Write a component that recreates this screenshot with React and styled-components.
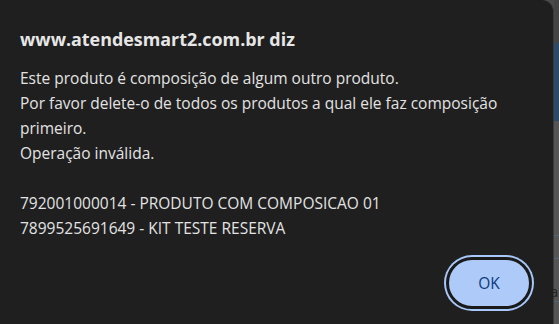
import React from 'react'
import styled, { createGlobalStyle } from 'styled-components'

const GlobalStyle = createGlobalStyle`
  html, body {
    margin: 0;
    padding: 0;
    background: #4a4a4a;
    overflow: hidden;
  }
`

const message = {
  host: 'www.atendesmart2.com.br',
  lines: [
    'Este produto é composição de algum outro produto.',
    'Por favor delete-o de todos os produtos a qual ele faz composição primeiro.',
    'Operação inválida.',
    '',
    '792001000014 - PRODUTO COM COMPOSICAO 01',
    '7899525691649 - KIT TESTE RESERVA'
  ]
}

function App() {
  return (
    <Screen>
      <GlobalStyle />
      <Dialog>
        <Title>{message.host} diz</Title>
        <Message>
          {message.lines.map((line, i) => (
            <Line key={i}>{line || '\u00a0'}</Line>
          ))}
        </Message>
        <Actions>
          <OkButton autoFocus>OK</OkButton>
        </Actions>
      </Dialog>
      <Backdrop>
        <HeaderStrip />
        <BlueBand />
        <Table>
          <Row />
          <Row />
          <Cell>a</Cell>
          <Row />
        </Table>
      </Backdrop>
    </Screen>
  )
}

const Screen = styled.div`
  display: flex;
  width: 559px;
  height: 324px;
  overflow: hidden;
`

const Dialog = styled.div`
  width: 554px;
  flex: none;
  height: 340px;
  box-sizing: border-box;
  background: #1f1f1f;
  border-right: 1px solid #3a3a3a;
  border-top-right-radius: 12px;
  padding: 26px 21px 0 20px;
  font-family: 'Open Sans', 'Noto Sans', sans-serif;
  color: #e3e3e3;
`

const Title = styled.h1`
  margin: 0;
  font-size: 17.9px;
  font-weight: 700;
  line-height: 26px;
  color: #e6e6e6;
`

const Message = styled.div`
  margin-top: 14px;
  font-size: 15.5px;
  line-height: 25px;
  width: 512px;
`

const Line = styled.div`
  white-space: pre-wrap;
`

const Actions = styled.div`
  display: flex;
  justify-content: flex-end;
  margin-top: 16px;
`

const OkButton = styled.button`
  width: 86px;
  height: 52px;
  box-sizing: border-box;
  border: 3px solid #1a1a1a;
  border-radius: 26px;
  background: #adcaf8;
  box-shadow: 0 0 0 2px #a8c7fa;
  outline: none;
  color: #0b3a80;
  font-family: 'Open Sans', 'Noto Sans', sans-serif;
  font-size: 15.5px;
  padding: 0;
`

const Backdrop = styled.div`
  flex: 1;
  display: flex;
  flex-direction: column;
  background: #555;
`

const HeaderStrip = styled.div`
  height: 46px;
  background: #444;
`

const BlueBand = styled.div`
  height: 82px;
  background: #2c4a68;
`

const Table = styled.div`
  flex: 1;
  padding-top: 114px;
  display: flex;
  flex-direction: column;
`

const Row = styled.div`
  height: 22px;
  border-top: 1px solid #4f6478;
`

const Cell = styled.div`
  height: 20px;
  font-family: 'Open Sans', sans-serif;
  font-size: 15px;
  line-height: 20px;
  color: #222;
  margin-left: -4px;
`

export default App
